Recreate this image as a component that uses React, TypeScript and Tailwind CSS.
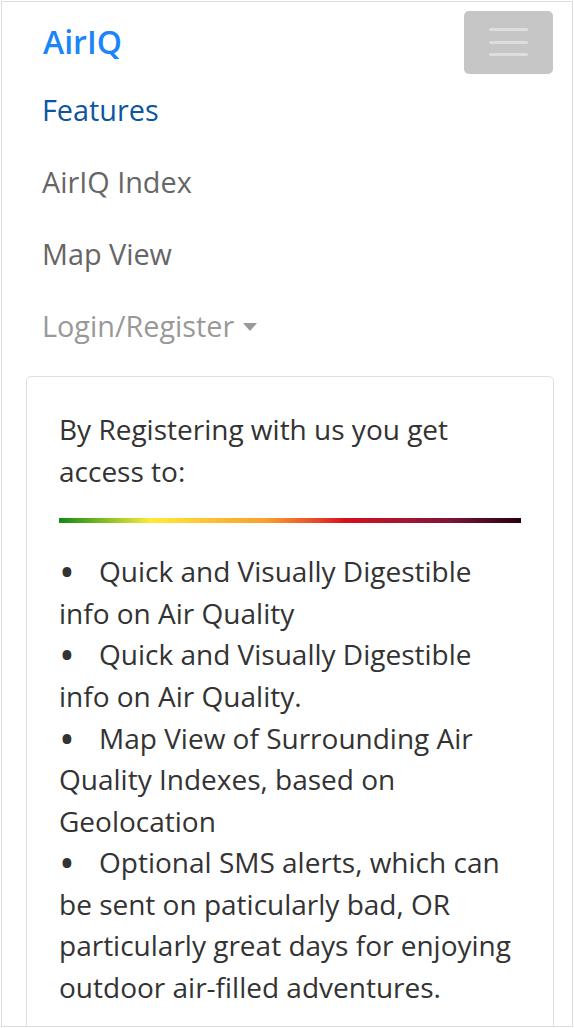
import React from "react";

const items = [
  "Quick and Visually Digestible info on Air Quality",
  "Quick and Visually Digestible info on Air Quality.",
  "Map View of Surrounding Air Quality Indexes, based on Geolocation",
  "Optional SMS alerts, which can be sent on paticularly bad, OR particularly great days for enjoying outdoor air-filled adventures.",
];

export default function App() {
  return (
    <div
      className="w-[574px] h-[1028px] p-[1px] bg-white overflow-hidden"
      style={{ fontFamily: '"Open Sans", sans-serif' }}
    >
      <div className="h-[1026px] border border-[#dcdcdc] overflow-hidden">
        <div className="flex items-center justify-between pt-[8px] pl-[41px] pr-[19px] h-[72px]">
          <span className="text-[32px] leading-[48px] font-semibold text-[#1a84fb]">AirIQ</span>
          <div className="w-[89px] h-[63px] rounded-[5px] bg-[#c6c6c6] flex flex-col items-center justify-center gap-[9.5px]">
            <span className="block w-[39px] h-[3px] rounded-full bg-[#dedede]" />
            <span className="block w-[39px] h-[3px] rounded-full bg-[#dedede]" />
            <span className="block w-[39px] h-[3px] rounded-full bg-[#dedede]" />
          </div>
        </div>
        <nav className="flex flex-col pl-[40px] text-[28.8px] leading-[43.2px]">
          <span className="py-[14.4px] text-[#0d559f]">Features</span>
          <span className="py-[14.4px] text-[#666666]">AirIQ Index</span>
          <span className="py-[14.4px] text-[#666666]">Map View</span>
          <span className="py-[14.4px] text-[#999999] flex items-center">
            Login/Register
            <span className="ml-[9px] mt-[2px] w-0 h-0 border-l-[7px] border-r-[7px] border-t-[8px] border-l-transparent border-r-transparent border-t-[#999999]" />
          </span>
        </nav>
        <div className="ml-[24px] mt-[14px] w-[528px] border border-[#dfdfdf] rounded-[5px] p-[32px] text-[28px] leading-[41.6px] text-[#333333]">
          <p>By Registering with us you get access to:</p>
          <div
            className="mt-[26px] h-[5px] w-full"
            style={{
              background:
                "linear-gradient(to right, #138a13 0%, #9cc62a 12%, #ffeb3b 20%, #ffc233 32%, #f7a02c 45%, #e8452a 56%, #d5101e 62%, #a31532 75%, #7a1538 85%, #2a000c 100%)",
            }}
          />
          <div className="mt-[28px]">
            {items.map((t, i) => (
              <div key={i}>
                <span className="inline-block w-[40px] text-[42px] leading-[0px] align-[-5px]">•</span>
                {t}
              </div>
            ))}
          </div>
        </div>
      </div>
    </div>
  );
}
